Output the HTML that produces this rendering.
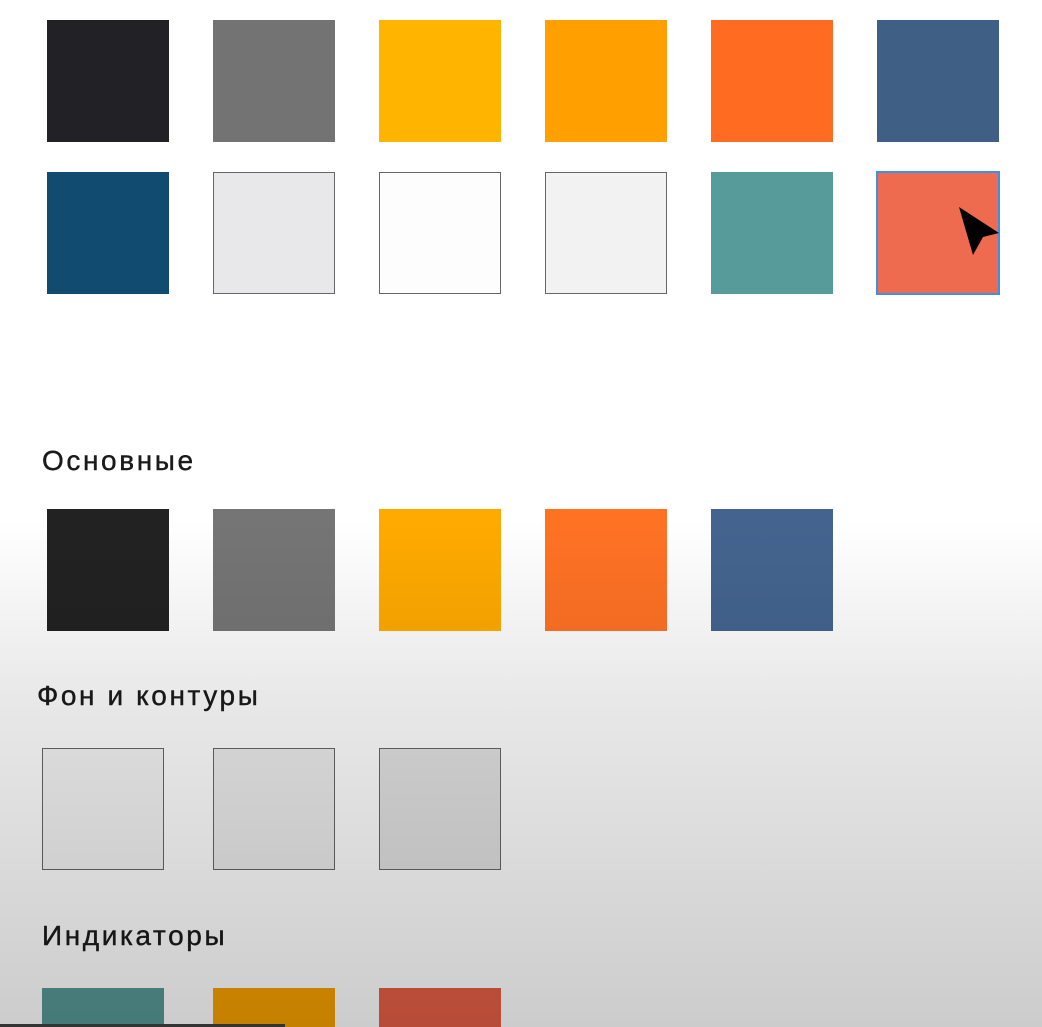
<!DOCTYPE html>
<html><head><meta charset="utf-8"><style>
html,body{margin:0;width:1042px;height:1027px;overflow:hidden}
body{position:relative;background:#fff;font-family:"Liberation Sans",sans-serif}
.s{position:absolute;width:122px;height:122px;box-sizing:border-box}
.o{border:1.5px solid #666}
.t{position:absolute;font-size:28px;color:#1a1a1a;letter-spacing:2.6px;-webkit-text-stroke:0.4px #1a1a1a}
#ov{position:absolute;left:0;top:0;width:1042px;height:1027px;background:linear-gradient(to bottom,rgba(0,0,0,0) 0,rgba(0,0,0,0) 520px,rgba(0,0,0,0.09) 700px,rgba(0,0,0,0.2) 1027px)}
</style></head><body>
<div class="s" style="left:47px;top:20px;background:#222226"></div>
<div class="s" style="left:213px;top:20px;background:#737373"></div>
<div class="s" style="left:379px;top:20px;background:#ffb400"></div>
<div class="s" style="left:545px;top:20px;background:#ffa000"></div>
<div class="s" style="left:711px;top:20px;background:#ff6c21"></div>
<div class="s" style="left:877px;top:20px;background:#3f5f85"></div>
<div class="s" style="left:47px;top:172px;background:#124b70"></div>
<div class="s o" style="left:213px;top:172px;background:#e8e8ea"></div>
<div class="s o" style="left:379px;top:172px;background:#fdfdfd"></div>
<div class="s o" style="left:545px;top:172px;background:#f2f2f2"></div>
<div class="s" style="left:711px;top:172px;background:#579b9b"></div>
<div class="s" style="left:876px;top:171px;width:124px;height:124px;background:#ee6b50;border:2px solid #3d8fe8"></div>
<svg style="position:absolute;left:955px;top:205px" width="46" height="52"><path d="M4 2 L44 28 L28 32 L18 50 Z" fill="#000"/></svg>
<div class="t" style="left:42px;top:445px">Основные</div>
<div class="s" style="left:47px;top:509px;background:#222"></div>
<div class="s" style="left:213px;top:509px;background:#757575"></div>
<div class="s" style="left:379px;top:509px;background:#ffaa00"></div>
<div class="s" style="left:545px;top:509px;background:#ff7224"></div>
<div class="s" style="left:711px;top:509px;background:#44648f"></div>
<div class="t" style="left:37px;top:680px">Фон и контуры</div>
<div class="s o" style="left:42px;top:748px;background:#f4f4f4"></div>
<div class="s o" style="left:213px;top:748px;background:#ececec"></div>
<div class="s o" style="left:379px;top:748px;background:#e2e2e2"></div>
<div class="t" style="left:42px;top:920px">Индикаторы</div>
<div class="s" style="left:42px;top:988px;height:39px;background:#579896"></div>
<div class="s" style="left:213px;top:988px;height:39px;background:#f6a000"></div>
<div class="s" style="left:379px;top:988px;height:39px;background:#e45f46"></div>
<div id="ov"></div>
<div style="position:absolute;left:0;top:1024px;width:285px;height:3px;background:#333"></div>
</body></html>
